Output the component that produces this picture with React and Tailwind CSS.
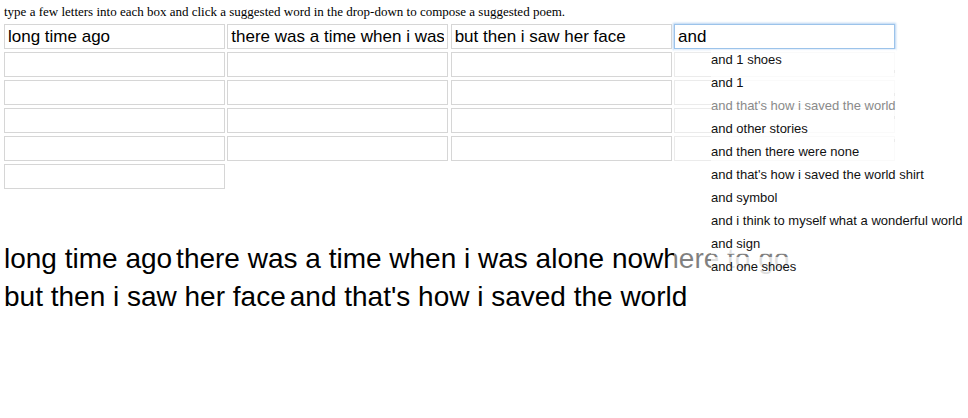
import React from "react";

const cols = [
  ["long time ago", "", "", "", "", ""],
  ["there was a time when i was", "", "", "", ""],
  ["but then i saw her face", "", "", "", ""],
  ["and", "", "", "", ""],
];

const suggestions = [
  "and 1 shoes",
  "and 1",
  "and that's how i saved the world",
  "and other stories",
  "and then there were none",
  "and that's how i saved the world shirt",
  "and symbol",
  "and i think to myself what a wonderful world",
  "and sign",
  "and one shoes",
];

function Box({ value, focused }) {
  return (
    <input
      readOnly
      value={value}
      className={
        "block w-full h-[25px] px-[3px] text-[17px] text-black bg-white outline-none font-['Liberation_Sans',Arial,sans-serif] " +
        (focused
          ? "border border-[#9cc3ea] shadow-[0_0_2px_1px_#b7d4f2]"
          : "border border-[#d6d6d6]")
      }
    />
  );
}

export default function App() {
  return (
    <div className="p-1 bg-white min-h-[418px] text-black">
      <p className="font-['Liberation_Serif','Times_New_Roman',serif] text-[13px] leading-[16px]">
        type a few letters into each box and click a suggested word in the drop-down to compose a suggested poem.
      </p>
      <div className="flex items-start gap-[2.33px] mt-1">
        {cols.map((col, ci) => (
          <div key={ci} className="relative w-[221px] flex flex-col gap-[3px]">
            {col.map((v, ri) => (
              <Box key={ri} value={v} focused={ci === 3 && ri === 0} />
            ))}
            {ci === 3 && (
              <ul className="absolute left-0 top-[25px] w-[222px] pl-[37px] pt-[1px] bg-white/50 z-10 font-['Liberation_Sans',Arial,sans-serif] text-[13px]">
                {suggestions.map((s, i) => (
                  <li
                    key={i}
                    className={
                      "h-[20px] leading-[20px] mb-[3px] bg-white/75 whitespace-nowrap " +
                      (i === 2 ? "text-[#8a8a8a]" : "text-[#111]")
                    }
                  >
                    {s}
                  </li>
                ))}
              </ul>
            )}
          </div>
        ))}
      </div>
      <div className="mt-[51px] font-['Liberation_Sans',Arial,sans-serif] text-[28px] leading-[38px] text-black">
        <div className="flex gap-[4px] whitespace-nowrap">
          <span>long time ago</span>
          <span>there was a time when i was alone nowhere to go</span>
        </div>
        <div className="flex gap-[4px] whitespace-nowrap">
          <span>but then i saw her face</span>
          <span>and that's how i saved the world</span>
        </div>
      </div>
    </div>
  );
}
